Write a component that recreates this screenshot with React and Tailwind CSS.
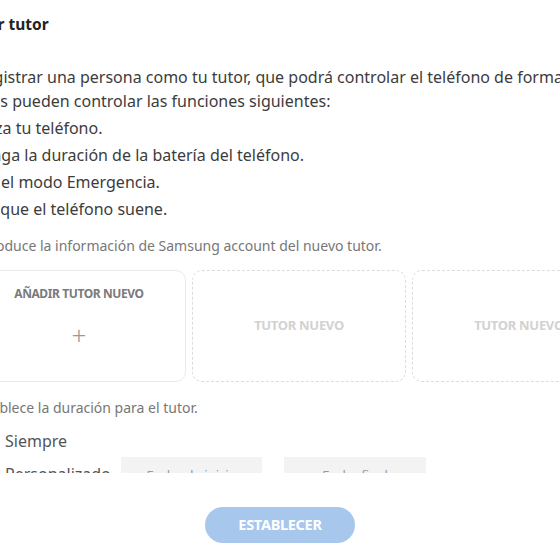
import React from 'react';

const features = [
  'Localiza tu teléfono.',
  'Prolonga la duración de la batería del teléfono.',
  'Activa el modo Emergencia.',
  'Hacer que el teléfono suene.',
];

function Radio({ checked }) {
  return (
    <span className="w-[18px] h-[18px] rounded-full border-2 border-[#9a9a9a] flex items-center justify-center shrink-0">
      {checked && <span className="w-[9px] h-[9px] rounded-full bg-[#9a9a9a]" />}
    </span>
  );
}

export default function App() {
  return (
    <div className="w-[560px] h-[560px] bg-white overflow-hidden relative font-['Noto_Sans',sans-serif] text-[#3c3c3c]">
      <div className="ml-[-81px] w-[800px] h-[473px] overflow-hidden">
        <h1 className="pt-[14px] pl-[34px] text-[15.5px] leading-[20px] font-bold text-[#222]">Añadir tutor</h1>

        <p className="mt-[31px] text-[16px] leading-[24px]">
          <span className="block">Puedes registrar una persona como tu tutor, que podrá controlar el teléfono de forma remota.</span>
          <span className="block ml-[5px]">Los tutores pueden controlar las funciones siguientes:</span>
        </p>

        <ul className="mt-[2px] pl-[33px] text-[16px] leading-[27px]">
          {features.map((f) => (
            <li key={f}>{f}</li>
          ))}
        </ul>

        <div className="pl-[53px]">
          <p className="mt-[14px] text-[14px] leading-[18px] text-[#777]">
            Introduce la información de Samsung account del nuevo tutor.
          </p>

          <div className="mt-[15px] flex gap-[6px]">
            <div className="w-[214px] h-[112px] rounded-[10px] border border-[#ebebeb] flex flex-col items-center">
              <span className="mt-[15px] text-[12px] leading-[16px] font-bold tracking-[-0.4px] text-[#7a7a7a]">AÑADIR TUTOR NUEVO</span>
              <span className="mt-[20px] text-[26px] leading-[26px] font-light text-[#9a9a9a]">+</span>
            </div>
            <div className="w-[214px] h-[112px] rounded-[10px] border border-dashed border-[#dcdcdc] flex items-center justify-center">
              <span className="text-[13px] font-bold tracking-[-0.3px] text-[#d2d2d2]">TUTOR NUEVO</span>
            </div>
            <div className="w-[214px] h-[112px] rounded-[10px] border border-dashed border-[#dcdcdc] flex items-center justify-center">
              <span className="text-[13px] font-bold tracking-[-0.3px] text-[#d2d2d2]">TUTOR NUEVO</span>
            </div>
          </div>

          <p className="mt-[17px] text-[14px] leading-[18px] text-[#777]">
            Establece la duración para el tutor.
          </p>

          <div className="mt-[13px] flex items-center gap-[15px] text-[16px] leading-[22px] text-[#555]">
            <Radio checked />
            <span>Siempre</span>
          </div>

          <div className="mt-[5px] flex items-start gap-[15px] text-[16px] leading-[22px] text-[#555]">
            <span className="mt-[8px]"><Radio /></span>
            <span className="mt-[6px] w-[101px] whitespace-nowrap">Personalizado</span>
            <div className="w-[141px] h-[30px] bg-[#f3f3f3] text-[13px] text-[#999] flex items-end justify-center pb-[1px]">Fecha de inicio</div>
            <div className="ml-[7px] w-[142px] h-[30px] bg-[#f3f3f3] text-[13px] text-[#999] flex items-end justify-center pb-[1px]">Fecha final</div>
          </div>
        </div>
      </div>

      <div className="flex justify-center pt-[34px]">
        <button className="w-[150px] h-[36px] rounded-full bg-[#a8c7ec] text-white text-[14.5px] font-bold tracking-[-0.3px]">
          ESTABLECER
        </button>
      </div>
    </div>
  );
}
